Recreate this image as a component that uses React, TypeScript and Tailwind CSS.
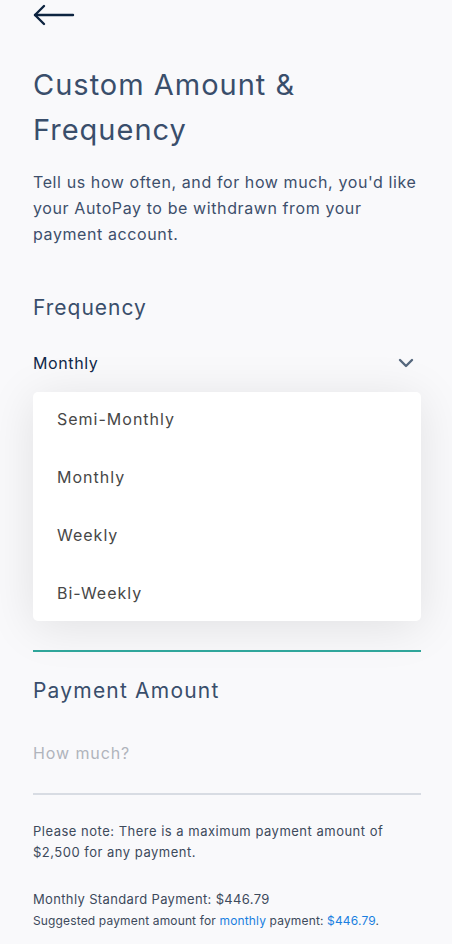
import React from "react";

const font = { fontFamily: "Inter, 'Noto Sans', sans-serif" };

export default function App() {
  return (
    <div className="min-h-screen w-full bg-[#f9f9fb]" style={font}>
      <div className="pl-[33px] pr-[31px]">
        <div className="h-[30px] flex items-center">
          <svg width="42" height="22" viewBox="0 0 42 22" fill="none">
            <path d="M2 11 H40" stroke="#0d2440" strokeWidth="2.4" strokeLinecap="round" />
            <path d="M11 2 L2 11 L11 20" stroke="#0d2440" strokeWidth="2.4" strokeLinecap="round" strokeLinejoin="round" />
          </svg>
        </div>
        <h1 className="mt-[32px] text-[29px] leading-[45px] text-[#394e6b] font-normal tracking-[1px]">
          Custom Amount &amp;<br />Frequency
        </h1>
        <p className="mt-[17px] text-[16px] leading-[26px] text-[#3d4f6b] tracking-[0.6px]">
          Tell us how often, and for how much, you'd like your AutoPay to be withdrawn from your payment account.
        </p>
        <h2 className="mt-[47px] text-[21px] leading-[28px] text-[#394e6b] tracking-[1px]">Frequency</h2>
        <div className="mt-[27px] flex items-center justify-between h-[28px]">
          <span className="text-[16px] text-[#0f2748] tracking-[0.6px]">Monthly</span>
          <svg width="16" height="10" viewBox="0 0 16 10" fill="none" className="mr-[7px]">
            <path d="M2 2 L8 8 L14 2" stroke="#55677d" strokeWidth="2.4" strokeLinecap="round" strokeLinejoin="round" />
          </svg>
        </div>
        <div className="mt-[15px] h-[229px] overflow-hidden bg-white rounded-[5px] shadow-[0_6px_48px_rgba(0,0,0,0.1)]">
          {["Semi-Monthly", "Monthly", "Weekly", "Bi-Weekly"].map((t) => (
            <div key={t} className="h-[58px] pt-[15px] px-[24px] text-[16px] leading-[24px] text-[#474747] tracking-[1px]">
              {t}
            </div>
          ))}
        </div>
        <div className="mt-[29px] h-[1.5px] bg-[#2fa59a]" />
        <h2 className="mt-[25px] text-[21px] leading-[28px] text-[#394e6b] tracking-[1.2px]">Payment Amount</h2>
        <div className="mt-[34px] h-[28px] flex items-center text-[16px] text-[#b0b4bc] tracking-[0.9px]">How much?</div>
        <div className="mt-[26px] h-[2px] bg-[#d8dce3]" />
        <p className="mt-[26px] text-[13px] leading-[21px] text-[#3d4a5c] tracking-[0.5px]">
          Please note: There is a maximum payment amount of $2,500 for any payment.
        </p>
        <p className="mt-[26px] text-[13px] leading-[21px] text-[#3d4a5c] tracking-[0.35px]">Monthly Standard Payment: $446.79</p>
        <p className="text-[12px] leading-[21px] text-[#3d4a5c] tracking-[0.15px]">
          Suggested payment amount for <span className="text-[#1a7fe0]">monthly</span> payment:{" "}
          <span className="text-[#1a7fe0]">$446.79</span>.
        </p>
      </div>
    </div>
  );
}
